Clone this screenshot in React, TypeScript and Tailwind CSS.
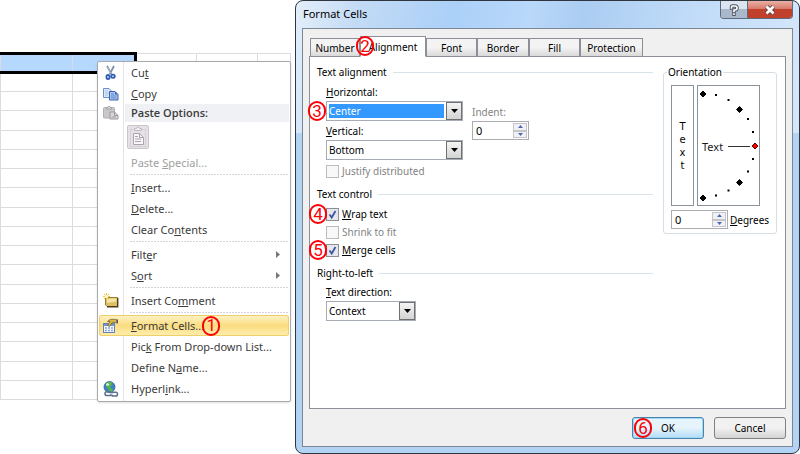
import { ReactNode, useState } from 'react';

const SHEET_ROWS = 18;
const TABS = [
  { name: 'Number', width: 'w-[50px]' },
  { name: 'Alignment', width: 'w-[66px]' },
  { name: 'Font', width: 'w-[51px]' },
  { name: 'Border', width: 'w-[52px]' },
  { name: 'Fill', width: 'w-[51px]' },
  { name: 'Protection', width: 'w-[63px]' },
];

/* ---------- icons ---------- */

const CutIcon = () => (
  <svg viewBox="0 0 16 16" className="size-4">
    <path d="M4 1l4.600 8.400M11 1L6.600 9.400" stroke="#7d8da8" strokeWidth="1.800" fill="none" />
    <path d="M4.500 2l3.600 6.500" stroke="#c9d3e2" strokeWidth="0.600" />
    <ellipse cx="5" cy="12" rx="1.600" ry="2" fill="none" stroke="#2f5cb5" strokeWidth="1.800" />
    <ellipse cx="10" cy="11.200" rx="1.800" ry="1.600" fill="none" stroke="#2f5cb5" strokeWidth="1.800" />
  </svg>
);

const CopyIcon = () => (
  <svg viewBox="0 0 16 16" className="size-4">
    <path d="M.5 2.500H6L8.500 5v6.500h-8z" fill="#dce8f8" stroke="#6d92cb" />
    <path d="M2 5h3M2 7h4M2 9h3" stroke="#a9c4ea" />
    <path d="M6.500 5.500H12l3 3V14H6.500z" fill="#a9c6f0" stroke="#3c62ad" />
    <path d="M12 5.500v3h3z" fill="#3c62ad" />
    <path d="M8 8h3M8 10h5.500M8 12h5.500" stroke="#5c87ce" />
  </svg>
);

const PasteIcon = () => (
  <svg viewBox="0 0 16 16" className="size-4">
    <rect x="0.500" y="2.500" width="11" height="10.500" rx="1" fill="#c9c7c9" stroke="#b2b0b2" />
    <path d="M3.500 4V2.500h1.300a1.200 1.200 0 012.400 0h1.300V4z" fill="#e6e4e6" stroke="#a19fa1" />
    <path d="M7 7h4.500L15 10.500V14H7z" fill="#d9d7d9" stroke="#9c9a9c" />
    <path d="M11.500 7v3.500H15M8.500 12H13" stroke="#9c9a9c" fill="none" />
  </svg>
);

const ClipboardIcon = () => (
  <svg viewBox="0 0 20 22" className="h-[22px] w-5">
    <rect x="2.500" y="3.500" width="15" height="17" fill="#e6e1e6" stroke="#d5d0d6" />
    <path d="M6.500 4.500V2.500H8.500a1.500 1.500 0 013 0h2v2z" fill="#f3f1f3" stroke="#bfbac0" />
    <path d="M5.500 7.500h6l4 4v7h-10z" fill="#f8f6f8" stroke="#aaa5ab" />
    <path d="M11.500 7.500v4h4M7 10.500h3M7 13h6M7 15.500h6" fill="none" stroke="#aaa5ab" />
  </svg>
);

const CommentIcon = () => (
  <svg viewBox="0 0 16 16" className="size-4">
    <path d="M2.500 4.500h12v9h-10l-2-1.500z" fill="#dcbf62" stroke="#9b7d2b" />
    <path d="M4 5.500h9.500v3L4 10z" fill="#f4e3a4" />
    <path d="M14.700 5v8.800H4" stroke="#4a3d1c" strokeWidth="1.400" fill="none" />
    <path d="M3.500 0v7M0 3.500h7M1 1l5 5M6 1L1 6" stroke="#f3c53c" />
    <circle cx="3.500" cy="3.500" r="1.600" fill="#fffbd8" />
  </svg>
);

const FormatIcon = () => (
  <svg viewBox="0 0 16 16" className="size-4">
    <rect x="0.500" y="5.500" width="11" height="9" fill="#f2f7ff" stroke="#6682b5" />
    <path d="M1 7h10" stroke="#6f95d5" strokeWidth="2" />
    <path d="M2 10h2M5 10h2M8 10h2M2 12.500h2M5 12.500h2M8 12.500h2" stroke="#8fa9d6" strokeWidth="1.500" />
    <path
      d="M4.500 3.500C6.500 1 10 1 12.500 1.500L15 2.600l-2 1.900-3.500-.3-3 4.300-1.800-1 2.300-4z"
      fill="#d9b84d"
      stroke="#76622b"
      strokeWidth="0.800"
    />
    <path d="M14.200 1.500v4" stroke="#5a5a5a" strokeWidth="1.600" />
  </svg>
);

const LinkIcon = () => (
  <svg viewBox="0 0 16 16" className="size-4">
    <circle cx="6.500" cy="6" r="5.500" fill="#3e82c9" stroke="#28548f" strokeWidth="0.700" />
    <path d="M3 2.500C5 .8 8 .5 9.500 2c1 2-2 2-2 4s3 1.500 2.500 3.500S6 11 5.500 8.500 2 6 3 2.500z" fill="#55b64b" />
    <ellipse cx="4.600" cy="3.500" rx="1.600" ry="1.200" fill="#d5f3d8" />
    <g fill="none" stroke="#5d6f8c" strokeWidth="1.500">
      <rect x="2" y="10.800" width="6" height="3.700" rx="1.800" />
      <rect x="8.500" y="11.300" width="6" height="3.700" rx="1.800" />
    </g>
    <path d="M6 12.800h5" stroke="#dce4f0" strokeWidth="1.200" />
  </svg>
);

const Dial = () => (
  <svg viewBox="0 0 63 121" className="h-[121px] w-[63px]">
    <rect x="0.500" y="0.500" width="62" height="120" fill="#fff" stroke="#8a929c" />
    <path
      d="M6 6l3 3-3 3-3-3zM42.500 21.500l3 3-3 3-3-3zM42.500 94.500l3 3-3 3-3-3zM6 110l3 3-3 3-3-3z"
      stroke="#000"
      fill="#000"
    />
    <path
      d="M18 10h2M30.500 15h2M50 34h2M55 47h2M55 74h2M50 86.500h2M30.500 105.500h2M18 110.500h2"
      stroke="#000"
      strokeWidth="2"
    />
    <path d="M31 61.500h22" stroke="#333" />
    <path d="M58 58l3 3-3 3-3-3z" fill="#f00" stroke="#500" />
    <text x="5" y="66" fontSize="11" fill="#1a1a1a">
      Text
    </text>
  </svg>
);

/* ---------- small parts ---------- */

const Step = ({ n, className }: { n: number; className: string }) => (
  <span
    className={`absolute flex h-5 w-[18px] items-center justify-center rounded-full border-2 border-[#fb0007] font-['Roboto',sans-serif] text-[17px] leading-none text-[#fb0007] ${className}`}
  >
    {n}
  </span>
);

interface MenuItemProps {
  icon?: ReactNode;
  children: ReactNode;
  arrow?: boolean;
  active?: boolean;
  disabled?: boolean;
}

const MenuItem = ({ icon, children, arrow, active, disabled }: MenuItemProps) => (
  <button
    role="menuitem"
    disabled={disabled}
    className={`relative flex h-[21px] w-full items-center rounded-[3px] text-left ${
      active
        ? 'bg-linear-to-b from-[#fdf3c9] via-[#fbdd80] to-[#fdeeb0] ring-1 ring-[#efcf68] ring-inset'
        : ''
    } ${disabled ? 'text-[#a0a0a0]' : ''}`}
  >
    <span className="flex w-8 shrink-0 pl-1">{icon}</span>
    <span className="relative">{children}</span>
    {arrow && (
      <svg viewBox="0 0 4 7" className="mr-[9px] ml-auto h-[7px] w-1">
        <path d="M0 0l4 3.500L0 7z" fill="#777" />
      </svg>
    )}
  </button>
);

const MenuSeparator = () => (
  <div role="separator" className="ml-[31px] h-1 pt-px">
    <div className="h-px bg-[repeating-linear-gradient(90deg,#d3d5d8_0_2px,#fff_2px_3px)]" />
  </div>
);

interface SelectProps {
  id: string;
  options: string[];
  highlighted?: boolean;
  className: string;
}

const Select = ({ id, options, highlighted, className }: SelectProps) => (
  <div className={`relative h-5 border border-[#a5acb5] bg-white ${className}`}>
    <select
      id={id}
      className={`h-full w-full appearance-none bg-clip-content p-[2px] pr-[18px] leading-[14px] outline-none ${
        highlighted ? 'bg-[#3399ff] text-white' : ''
      }`}
    >
      {options.map((option) => (
        <option key={option}>{option}</option>
      ))}
    </select>
    <span className="pointer-events-none absolute inset-y-0 right-0 flex w-4 items-center justify-center border border-[#707070] bg-linear-to-b from-[#f4f4f4] to-[#d4d4d4]">
      <svg viewBox="0 0 7 4" className="h-1 w-[7px]">
        <path d="M0 0h7L3.500 4z" />
      </svg>
    </span>
  </div>
);

const Spinner = ({ id }: { id: string }) => (
  <div className="flex h-[19px] w-[57px] border border-[#abadb3] bg-white p-px">
    <input id={id} defaultValue="0" className="w-0 flex-1 pl-[2px] text-[11px] outline-none" />
    <div className="flex w-[14px] flex-col">
      {['M0 3h5L2.500 0z', 'M0 0h5L2.500 3z'].map((d, i) => (
        <button
          key={d}
          aria-label={i === 0 ? 'Increase' : 'Decrease'}
          className="flex flex-1 items-center justify-center border border-[#c3c5cb] bg-[#f1f1f3]"
        >
          <svg viewBox="0 0 5 3" className="h-[3px] w-[5px]">
            <path d={d} fill="#4d68b5" />
          </svg>
        </button>
      ))}
    </div>
  </div>
);

interface CheckboxProps {
  children: ReactNode;
  defaultChecked?: boolean;
  disabled?: boolean;
  step?: number;
}

const Checkbox = ({ children, defaultChecked, disabled, step }: CheckboxProps) => (
  <label className={`relative flex h-4 items-center gap-[3px] ${disabled ? 'text-[#838383]' : ''}`}>
    <span className="grid size-[13px]">
      <input
        type="checkbox"
        defaultChecked={defaultChecked}
        disabled={disabled}
        className="peer col-start-1 row-start-1 size-[13px] appearance-none border border-[#8e8f8f] bg-[#e4e8ee] disabled:border-[#bcbcbc] disabled:bg-[#f8f8f8]"
      />
      <svg
        viewBox="0 0 13 13"
        className="pointer-events-none invisible col-start-1 row-start-1 size-[13px] peer-checked:visible"
      >
        <path d="M3.500 6.500l2.200 3L9.500 3" fill="none" stroke="#3d56a0" strokeWidth="1.800" />
      </svg>
    </span>
    <span>{children}</span>
    {step && <Step n={step} className="-left-[17px]" />}
  </label>
);

const Group = ({ title, children }: { title: string; children: ReactNode }) => (
  <section>
    <h3 className="flex h-4 items-center gap-[6px] after:h-px after:flex-1 after:bg-[#d8e3ea]">{title}</h3>
    <div className="pl-[9px]">{children}</div>
  </section>
);

/* ---------- panels ---------- */

const Sheet = () => (
  <table className="mt-[52px] w-full table-fixed border-collapse">
    <colgroup>
      <col className="w-[72px]" />
      <col className="w-[63px]" />
      <col className="w-[61px]" />
      <col className="w-[61px]" />
      <col />
    </colgroup>
    <tbody>
      {Array.from({ length: SHEET_ROWS }, (_, row) => (
        <tr key={row} className={row % 4 === 3 ? 'h-5' : 'h-[19px]'}>
          {[0, 1, 2, 3, 4].map((col) => (
            <td
              key={col}
              className={`border border-[#dadcdd] p-0 ${
                row === 0 && col < 2 ? 'border-t-3 border-b-3 border-t-black border-b-black bg-[#b5d9fe]' : ''
              } ${row === 0 && col === 1 ? 'border-r-3 border-r-black' : ''}`}
            />
          ))}
        </tr>
      ))}
    </tbody>
  </table>
);

const ContextMenu = () => (
  <div
    role="menu"
    className="absolute top-[61px] left-[97px] w-[194px] rounded-[2px] border border-[#a7abb0] bg-white bg-[linear-gradient(#e2e4e7,#e2e4e7)] bg-size-[1px_100%] bg-position-[25px_0] bg-no-repeat px-px pb-[2px] text-[#3b3b3b] shadow-sm"
  >
    <MenuItem icon={<CutIcon />}>
      Cu<u>t</u>
    </MenuItem>
    <MenuItem icon={<CopyIcon />}>
      <u>C</u>opy
    </MenuItem>
    <div className="flex h-[18px] items-center">
      <span className="w-[26px] shrink-0 pl-1">
        <PasteIcon />
      </span>
      <span className="flex h-full flex-1 items-center bg-[#eff1f5] pl-[6px] font-['Open_Sans',sans-serif] font-semibold">
        Paste Options:
      </span>
    </div>
    <div className="flex h-[30px] items-center pl-7">
      <button
        aria-label="Paste"
        disabled
        className="flex h-6 w-[22px] items-center justify-center rounded-[2px] border border-[#ccc6cc] bg-[#e6e1e6]"
      >
        <ClipboardIcon />
      </button>
    </div>
    <MenuItem disabled>
      Paste <u>S</u>pecial...
    </MenuItem>
    <MenuSeparator />
    <MenuItem>
      <u>I</u>nsert...
    </MenuItem>
    <MenuItem>
      <u>D</u>elete...
    </MenuItem>
    <MenuItem>
      Clear Co<u>n</u>tents
    </MenuItem>
    <MenuSeparator />
    <MenuItem arrow>
      Filt<u>e</u>r
    </MenuItem>
    <MenuItem arrow>
      S<u>o</u>rt
    </MenuItem>
    <MenuSeparator />
    <MenuItem icon={<CommentIcon />}>
      Insert Co<u>m</u>ment
    </MenuItem>
    <MenuSeparator />
    <MenuItem icon={<FormatIcon />} active>
      <u>F</u>ormat Cells...
      <Step n={1} className="-top-[2px] -right-4" />
    </MenuItem>
    <MenuItem>
      Pic<u>k</u> From Drop-down List...
    </MenuItem>
    <MenuItem>
      Define N<u>a</u>me...
    </MenuItem>
    <MenuItem icon={<LinkIcon />}>
      Hyperl<u>i</u>nk...
    </MenuItem>
  </div>
);

const AlignmentPanel = () => (
  <div className="flex flex-1 items-start gap-[10px] border border-[#8c8e98] bg-white pt-[7px] pr-2 pl-[7px]">
    <div className="flex flex-1 flex-col gap-[7px]">
      <Group title="Text alignment">
        <div className="mt-1 flex gap-[9px]">
          <div className="w-[137px]">
            <label htmlFor="horizontal" className="block h-[17px]">
              <u>H</u>orizontal:
            </label>
            <div className="relative">
              <Select id="horizontal" options={['Center', 'General', 'Left', 'Right']} highlighted className="w-full" />
              <Step n={3} className="top-0 -left-[18px]" />
            </div>
            <label htmlFor="vertical" className="mt-[2px] block h-[17px]">
              <u>V</u>ertical:
            </label>
            <Select id="vertical" options={['Bottom', 'Center', 'Top']} className="w-full" />
          </div>
          <div className="pt-5">
            <label htmlFor="indent" className="block h-[17px] text-[#838383]">
              Indent:
            </label>
            <Spinner id="indent" />
          </div>
        </div>
        <div className="pt-[3px]">
          <Checkbox disabled>Justify distributed</Checkbox>
        </div>
      </Group>
      <Group title="Text control">
        <div className="flex flex-col gap-[2px] pt-1">
          <Checkbox defaultChecked step={4}>
            <u>W</u>rap text
          </Checkbox>
          <Checkbox disabled>Shrink to fit</Checkbox>
          <Checkbox defaultChecked step={5}>
            <u>M</u>erge cells
          </Checkbox>
        </div>
      </Group>
      <Group title="Right-to-left">
        <label htmlFor="direction" className="mt-[3px] block h-[17px]">
          <u>T</u>ext direction:
        </label>
        <Select id="direction" options={['Context', 'Left-to-Right', 'Right-to-Left']} className="w-[90px]" />
      </Group>
    </div>
    <fieldset className="w-[114px] rounded-[3px] border border-[#d5dfe5] pt-[5px] pb-1 pl-[7px]">
      <legend className="-ml-1 h-4 px-px">Orientation</legend>
      <div className="flex gap-[3px]">
        <button className="flex w-[23px] flex-col items-center justify-center border border-[#8a929c] font-['DejaVu_Sans',sans-serif] leading-[13px]">
          {['T', 'e', 'x', 't'].map((letter, i) => (
            <span key={i}>{letter}</span>
          ))}
        </button>
        <Dial />
      </div>
      <div className="mt-1 flex items-center gap-[2px]">
        <Spinner id="degrees" />
        <label htmlFor="degrees">
          <u>D</u>egrees
        </label>
      </div>
    </fieldset>
  </div>
);

const FormatDialog = () => {
  const [tab, setTab] = useState('Alignment');

  return (
    <div
      role="dialog"
      aria-label="Format Cells"
      className="flex flex-col rounded-lg border border-[#30363e] bg-[#b3d3f5] bg-[linear-gradient(100deg,#e4eefa_0%,#c3dbf5_12%,#abd0f8_30%,#b9d8fa_45%,#abcdf2_55%,#c0dbf8_75%,#d5e7fb_100%)] bg-size-[100%_132px] bg-no-repeat px-[6px] pb-[6px] text-[10px] text-black"
    >
      <div className="flex h-[27px] items-start">
        <h2 className="flex-1 pt-[5px] pl-px text-[11px] leading-4">Format Cells</h2>
        <div className="flex h-[18px] overflow-hidden rounded-b-[4px] border border-t-0 border-[#5d6b7c]">
          <button
            aria-label="Help"
            className="flex w-[27px] items-center justify-center border-r border-[#5d6b7c] bg-linear-to-b from-[#dbe5ef] from-50% to-[#a9b9cb] to-50%"
          >
            <svg viewBox="0 0 12 12" className="size-3">
              <g fill="none" strokeLinecap="square">
                <path d="M3.500 4V3a1 1 0 011-1h2.500a1.500 1.500 0 010 4H6v1.500M6 10v.3" stroke="#4f5863" strokeWidth="3.500" />
                <path d="M3.500 4V3a1 1 0 011-1h2.500a1.500 1.500 0 010 4H6v1.500M6 10v.3" stroke="#fff" strokeWidth="1.600" />
              </g>
            </svg>
          </button>
          <button
            aria-label="Close"
            className="flex w-11 items-center justify-center bg-linear-to-b from-[#e8b0a5] from-0% via-[#d67566] via-50% to-[#c1402c] to-50%"
          >
            <svg viewBox="0 0 12 10" className="h-[10px] w-3">
              <path d="M2.500 1.500l7 7M9.500 1.500l-7 7" stroke="#5b4040" strokeWidth="4.500" />
              <path d="M2.500 1.500l7 7M9.500 1.500l-7 7" stroke="#fff" strokeWidth="2.800" />
            </svg>
          </button>
        </div>
      </div>
      <div className="flex flex-1 flex-col border border-[#7d8794] bg-[#f0f0f0] px-[6px] py-[7px]">
        <div role="tablist" className="-mb-px flex items-end pl-px">
          {TABS.map(({ name, width }) => (
            <div key={name} className={`relative ${width}`}>
              <button
                role="tab"
                aria-selected={tab === name}
                onClick={() => setTab(name)}
                className={`block w-full border border-[#8c8e98] ${
                  tab === name
                    ? 'h-[21px] border-b-white bg-white'
                    : 'h-[19px] bg-linear-to-b from-[#f3f3f3] from-50% to-[#d9d9d9]'
                }`}
              >
                {name}
              </button>
              {name === 'Alignment' && <Step n={2} className="top-0 -left-1" />}
            </div>
          ))}
        </div>
        <AlignmentPanel />
        <div className="mt-2 flex justify-end gap-[10px]">
          <button className="relative h-[22px] w-[72px] rounded-[3px] border border-[#4a83ab] bg-linear-to-b from-[#e6f4fc] from-50% to-[#b0dcf6] ring-1 ring-[#9fd8f5] ring-inset">
            OK
            <Step n={6} className="top-0 left-px" />
          </button>
          <button className="h-[22px] w-[72px] rounded-[3px] border border-[#808080] bg-linear-to-b from-[#f1f1f1] from-50% to-[#d3d3d3]">
            Cancel
          </button>
        </div>
      </div>
    </div>
  );
};

const App = () => (
  <main className="grid min-h-screen grid-cols-[295px_1fr] bg-white font-['Noto_Sans',sans-serif] text-[11px] leading-4">
    <div className="relative pr-1">
      <Sheet />
      <ContextMenu />
    </div>
    <FormatDialog />
  </main>
);

export default App;
